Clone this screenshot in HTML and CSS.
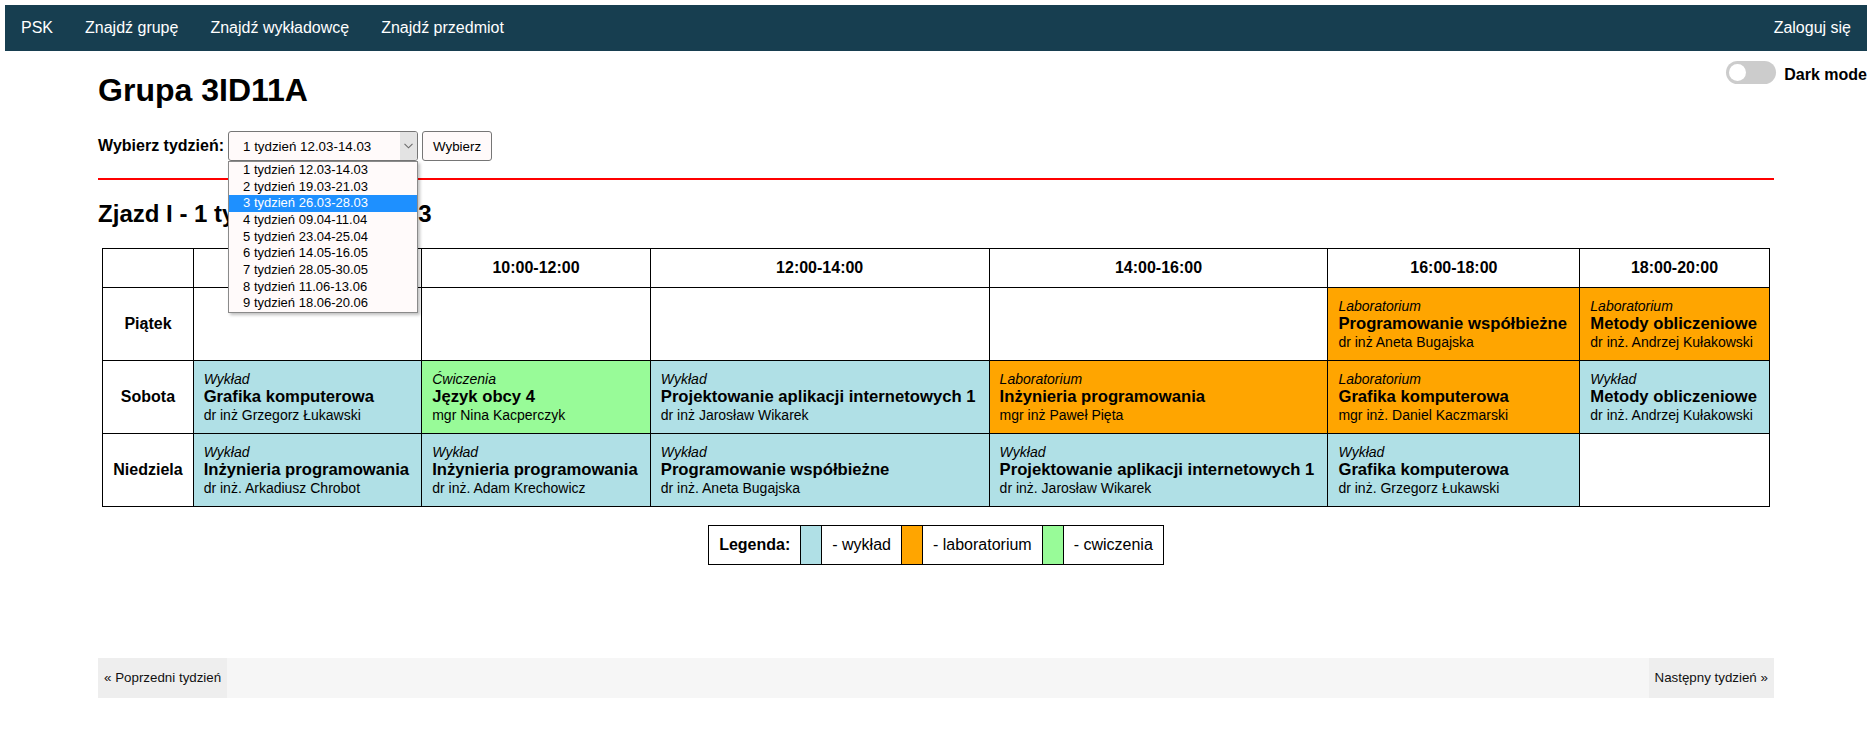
FILE: index.html
```html
<!DOCTYPE html>
<html lang="pl">
<head>
<meta charset="utf-8">
<title>Grupa 3ID11A</title>
<link rel="stylesheet" href="styles.css">
</head>
<body>
<nav class="navbar">
  <div class="nav-links">
    <a class="nav-link" href="#">PSK</a>
    <a class="nav-link" href="#">Znajdź grupę</a>
    <a class="nav-link" href="#">Znajdź wykładowcę</a>
    <a class="nav-link" href="#">Znajdź przedmiot</a>
  </div>
  <a class="nav-link" href="#">Zaloguj się</a>
</nav>

<div class="theme-toggle">
  <span class="switch"><span class="knob"></span></span>
  <span class="theme-label">Dark mode</span>
</div>

<main class="container">
  <h1 class="title">Grupa 3ID11A</h1>

  <form class="week-form">
    <span class="week-label">Wybierz tydzień:</span>
    <div class="select-wrap">
      <div class="select">
        <span class="select-value">1 tydzień 12.03-14.03</span>
        <span class="select-arrow">
          <svg width="9" height="6" viewBox="0 0 9 6"><path d="M0.5 0.8 L4.5 4.8 L8.5 0.8" fill="none" stroke="#6b6b6b" stroke-width="1.1"/></svg>
        </span>
      </div>
      <ul class="dropdown">
        <li class="option">1 tydzień 12.03-14.03</li>
        <li class="option">2 tydzień 19.03-21.03</li>
        <li class="option option-active">3 tydzień 26.03-28.03</li>
        <li class="option">4 tydzień 09.04-11.04</li>
        <li class="option">5 tydzień 23.04-25.04</li>
        <li class="option">6 tydzień 14.05-16.05</li>
        <li class="option">7 tydzień 28.05-30.05</li>
        <li class="option">8 tydzień 11.06-13.06</li>
        <li class="option">9 tydzień 18.06-20.06</li>
      </ul>
    </div>
    <button class="btn" type="button">Wybierz</button>
  </form>

  <hr class="divider">

  <h2 class="subtitle">Zjazd I - 1 tydzień 12.03-14.03</h2>

  <table class="schedule">
    <tr>
      <th></th>
      <th>08:00-10:00</th>
      <th>10:00-12:00</th>
      <th>12:00-14:00</th>
      <th>14:00-16:00</th>
      <th>16:00-18:00</th>
      <th>18:00-20:00</th>
    </tr>
    <tr>
      <th class="day">Piątek</th>
      <td></td>
      <td></td>
      <td></td>
      <td></td>
      <td class="slot lab"><span class="kind">Laboratorium</span><span class="subject">Programowanie współbieżne</span><span class="teacher">dr inż Aneta Bugajska</span></td>
      <td class="slot lab"><span class="kind">Laboratorium</span><span class="subject">Metody obliczeniowe</span><span class="teacher">dr inż. Andrzej Kułakowski</span></td>
    </tr>
    <tr>
      <th class="day">Sobota</th>
      <td class="slot lecture"><span class="kind">Wykład</span><span class="subject">Grafika komputerowa</span><span class="teacher">dr inż Grzegorz Łukawski</span></td>
      <td class="slot exercise"><span class="kind">Ćwiczenia</span><span class="subject">Język obcy 4</span><span class="teacher">mgr Nina Kacperczyk</span></td>
      <td class="slot lecture"><span class="kind">Wykład</span><span class="subject">Projektowanie aplikacji internetowych 1</span><span class="teacher">dr inż Jarosław Wikarek</span></td>
      <td class="slot lab"><span class="kind">Laboratorium</span><span class="subject">Inżynieria programowania</span><span class="teacher">mgr inż Paweł Pięta</span></td>
      <td class="slot lab"><span class="kind">Laboratorium</span><span class="subject">Grafika komputerowa</span><span class="teacher">mgr inż. Daniel Kaczmarski</span></td>
      <td class="slot lecture"><span class="kind">Wykład</span><span class="subject">Metody obliczeniowe</span><span class="teacher">dr inż. Andrzej Kułakowski</span></td>
    </tr>
    <tr>
      <th class="day">Niedziela</th>
      <td class="slot lecture"><span class="kind">Wykład</span><span class="subject">Inżynieria programowania</span><span class="teacher">dr inż. Arkadiusz Chrobot</span></td>
      <td class="slot lecture"><span class="kind">Wykład</span><span class="subject">Inżynieria programowania</span><span class="teacher">dr inż. Adam Krechowicz</span></td>
      <td class="slot lecture"><span class="kind">Wykład</span><span class="subject">Programowanie współbieżne</span><span class="teacher">dr inż. Aneta Bugajska</span></td>
      <td class="slot lecture"><span class="kind">Wykład</span><span class="subject">Projektowanie aplikacji internetowych 1</span><span class="teacher">dr inż. Jarosław Wikarek</span></td>
      <td class="slot lecture"><span class="kind">Wykład</span><span class="subject">Grafika komputerowa</span><span class="teacher">dr inż. Grzegorz Łukawski</span></td>
      <td></td>
    </tr>
  </table>

  <table class="legend">
    <tr>
      <th>Legenda:</th>
      <td class="swatch lecture"></td>
      <td>- wykład</td>
      <td class="swatch lab"></td>
      <td>- laboratorium</td>
      <td class="swatch exercise"></td>
      <td>- cwiczenia</td>
    </tr>
  </table>

  <div class="pager">
    <a class="pager-link" href="#">« Poprzedni tydzień</a>
    <a class="pager-link" href="#">Następny tydzień »</a>
  </div>
</main>
</body>
</html>
```

FILE: styles.css
```css
* {
  box-sizing: border-box;
}

html {
  background: #fff;
}

body {
  margin: 5px 7px 5px 5px;
  position: relative;
  font-family: "Liberation Sans", Arial, sans-serif;
  color: #000;
}

/* Navbar */
.navbar {
  display: flex;
  justify-content: space-between;
  align-items: center;
  height: 46px;
  background: #173e50;
}

.nav-links {
  display: flex;
}

.nav-link {
  display: block;
  padding: 14px 16px;
  font-size: 16px;
  line-height: 18px;
  color: #fff;
  text-decoration: none;
}

/* Dark mode toggle */
.theme-toggle {
  position: absolute;
  top: 56px;
  right: 0;
  display: flex;
  align-items: center;
  gap: 8px;
}

.switch {
  display: flex;
  align-items: center;
  width: 50px;
  height: 23px;
  padding: 0 3px;
  border-radius: 12px;
  background: #ccc;
}

.knob {
  width: 17px;
  height: 17px;
  border-radius: 50%;
  background: #fff;
}

.theme-label {
  font-size: 16px;
  font-weight: bold;
  padding-top: 5px;
}

/* Content */
.container {
  width: 90%;
  margin: 0 auto;
}

.title {
  font-size: 32px;
  font-weight: bold;
  margin: 21px 0 22px;
}

.week-form {
  display: flex;
  align-items: center;
  height: 30px;
}

.week-label {
  font-size: 16px;
  font-weight: bold;
  margin-right: 4px;
}

.select-wrap {
  position: relative;
  width: 190px;
  height: 30px;
}

.select {
  display: flex;
  align-items: stretch;
  height: 30px;
  border: 1px solid #767676;
  border-radius: 3px;
  background: #fffafa;
  overflow: hidden;
}

.select-value {
  flex: 1;
  display: flex;
  align-items: center;
  padding-left: 14px;
  font-size: 13.333px;
}

.select-arrow {
  display: flex;
  align-items: center;
  justify-content: center;
  width: 17px;
  background: #e3e3e3;
}

.dropdown {
  position: absolute;
  top: 30px;
  left: 0;
  width: 190px;
  margin: 0;
  padding: 0;
  list-style: none;
  border: 1px solid #8a8a8a;
  background: #fffafa;
  box-shadow: 2px 2px 3px rgba(0, 0, 0, 0.25);
  z-index: 5;
}

.option {
  height: 16.67px;
  line-height: 16.67px;
  padding-left: 14px;
  font-size: 13px;
  color: #000;
  white-space: nowrap;
}

.option-active {
  background: #1e90ff;
  color: #fff;
}

.btn {
  height: 30px;
  margin-left: 4px;
  padding: 0 10px;
  border: 1px solid #767676;
  border-radius: 3px;
  background: #fffafa;
  font-family: "Liberation Sans", Arial, sans-serif;
  font-size: 13.333px;
  color: #000;
}

.divider {
  margin: 17px 0 0;
  border: none;
  border-top: 2px solid #f00;
  height: 0;
}

.subtitle {
  font-size: 24px;
  font-weight: bold;
  margin: 20px 0 20px;
}

/* Schedule */
.schedule {
  width: 99.5%;
  border-collapse: collapse;
  margin: 0 auto;
}

.schedule th,
.schedule td {
  border: 1px solid #000;
  padding: 10px;
}

.schedule th {
  font-size: 16px;
  font-weight: bold;
  text-align: center;
  white-space: nowrap;
}

.schedule .day {
  width: 1%;
}

.slot {
  text-align: left;
  white-space: nowrap;
}

.kind {
  display: block;
  font-style: italic;
  font-size: 14px;
}

.subject {
  display: block;
  font-weight: bold;
  font-size: 16.667px;
}

.teacher {
  display: block;
  font-size: 14px;
}

.lecture {
  background: #b0e0e6;
}

.lab {
  background: #ffa500;
}

.exercise {
  background: #98fb98;
}

/* Legend */
.legend {
  border-collapse: collapse;
  margin: 18px auto 0;
}

.legend th,
.legend td {
  border: 1px solid #000;
  padding: 10px;
  font-size: 16px;
  white-space: nowrap;
}

.legend th {
  font-weight: bold;
}

/* Pager */
.pager {
  display: flex;
  justify-content: space-between;
  margin-top: 93px;
  background: #f6f6f6;
}

.pager-link {
  display: block;
  padding: 12px 6px;
  font-size: 13.333px;
  line-height: 16px;
  color: #111;
  text-decoration: none;
  background: #eee;
}
```
